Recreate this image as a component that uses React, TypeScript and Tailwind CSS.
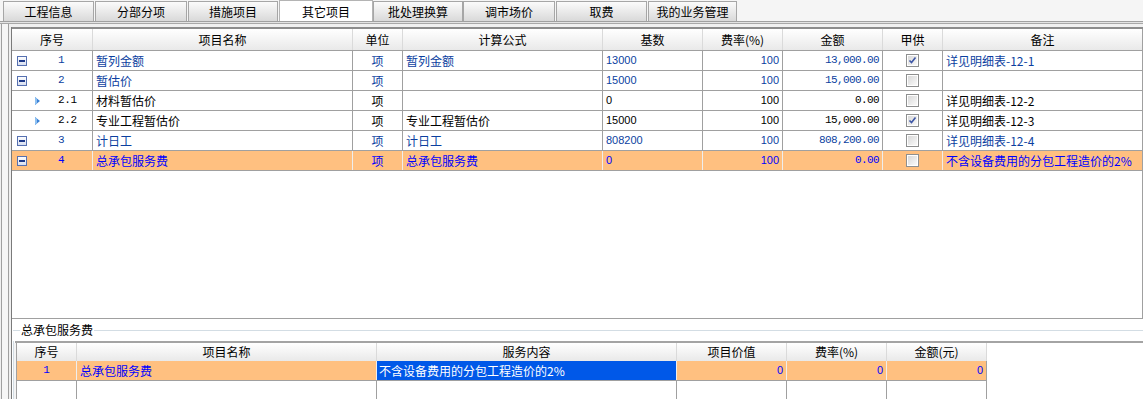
import React from "react";

const FONT = "font-['Liberation_Sans','Noto_Sans_CJK_SC',sans-serif]";
const CJK = "font-['Noto_Sans_CJK_SC',sans-serif]";
const MONO = "font-['Liberation_Mono','Noto_Sans_CJK_SC',monospace]";

const MAIN_COLS =
  "grid grid-cols-[81px_260px_50px_200px_100px_80px_100px_60px_200px]";
const SUB_COLS = "grid grid-cols-[60px_300px_300px_110px_100px_100px]";

const tabs = [
  { label: "工程信息", cls: "w-[91px] ml-[3px]" },
  { label: "分部分项", cls: "w-[92px] ml-[1px]" },
  { label: "措施项目", cls: "w-[90px] ml-[1px]" },
  { label: "其它项目", cls: "w-[94px] ml-[1px]", active: true },
  { label: "批处理换算", cls: "w-[90px] ml-0" },
  { label: "调市场价", cls: "w-[92px] ml-0" },
  { label: "取费", cls: "w-[91px] ml-[1px]" },
  { label: "我的业务管理", cls: "w-[89px] ml-[1px]" },
];

type Row = {
  kind: "parent" | "child" | "selected";
  no: string;
  name: string;
  formula: string;
  base: string;
  rate: string;
  amount: string;
  checked: boolean;
  note: string;
};

const rows: Row[] = [
  { kind: "parent", no: "1", name: "暂列金额", formula: "暂列金额", base: "13000", rate: "100", amount: "13,000.00", checked: true, note: "详见明细表-12-1" },
  { kind: "parent", no: "2", name: "暂估价", formula: "", base: "15000", rate: "100", amount: "15,000.00", checked: false, note: "" },
  { kind: "child", no: "2.1", name: "材料暂估价", formula: "", base: "0", rate: "100", amount: "0.00", checked: false, note: "详见明细表-12-2" },
  { kind: "child", no: "2.2", name: "专业工程暂估价", formula: "专业工程暂估价", base: "15000", rate: "100", amount: "15,000.00", checked: true, note: "详见明细表-12-3" },
  { kind: "parent", no: "3", name: "计日工", formula: "计日工", base: "808200", rate: "100", amount: "808,200.00", checked: false, note: "详见明细表-12-4" },
  { kind: "selected", no: "4", name: "总承包服务费", formula: "总承包服务费", base: "0", rate: "100", amount: "0.00", checked: false, note: "不含设备费用的分包工程造价的2%" },
];

function CollapseIcon() {
  return (
    <svg width="10" height="10" viewBox="0 0 10 10" className="shrink-0">
      <defs>
        <linearGradient id="cg" x1="0" y1="0" x2="0" y2="1">
          <stop offset="0" stopColor="#ffffff" />
          <stop offset="1" stopColor="#d6ddf0" />
        </linearGradient>
      </defs>
      <rect x="0.5" y="0.5" width="9" height="9" fill="url(#cg)" stroke="#5670b0" />
      <rect x="2" y="4" width="6" height="2" fill="#1e3a8a" />
    </svg>
  );
}

function Triangle() {
  return (
    <svg width="5" height="8" viewBox="0 0 5 8" className="shrink-0">
      <path d="M0 0 L5 4 L0 8 Z" fill="#3b82d6" />
      <path d="M0 0 L2 1.5 L2 6.5 L0 8 Z" fill="#8ec0f0" />
    </svg>
  );
}

function CheckBox({ checked }: { checked: boolean }) {
  return (
    <svg width="13" height="13" viewBox="0 0 13 13">
      <defs>
        <linearGradient id="cbg" x1="0" y1="0" x2="1" y2="1">
          <stop offset="0" stopColor="#d8d8d8" />
          <stop offset="1" stopColor="#fafafa" />
        </linearGradient>
      </defs>
      <rect x="0.5" y="0.5" width="12" height="12" fill="#ffffff" stroke="#8e8f8f" />
      <rect x="2" y="2" width="9" height="9" fill="url(#cbg)" />
      {checked && (
        <path d="M3.5 6.5 L5.5 8.5 L9.5 3.5" fill="none" stroke="#3d56a6" strokeWidth="1.6" />
      )}
    </svg>
  );
}

function MainRow({ r }: { r: Row }) {
  const sel = r.kind === "selected";
  const color =
    r.kind === "parent" ? "text-[#0c3f9f]" : r.kind === "child" ? "text-black" : "text-[#0000ff]";
  const bg = sel ? "bg-[#ffc080]" : "bg-white";
  const vb = sel ? "border-r border-[#eeeeee]" : "border-r border-[#a0a0a0]";
  const cell = `${vb} ${bg} flex items-center overflow-hidden whitespace-nowrap`;
  return (
    <div className={`${MAIN_COLS} h-[20px] border-b border-[#a0a0a0] text-[12px] ${color}`}>
      <div className={cell}>
        {r.kind === "child" ? (
          <>
            <div className="w-[23px] shrink-0" />
            <Triangle />
            <span className={`ml-[18px] ${MONO} text-[11px] tracking-[-0.4px]`}>{r.no}</span>
          </>
        ) : (
          <>
            <div className="w-[5px] shrink-0" />
            <CollapseIcon />
            <span className={`ml-[31px] ${MONO} text-[11px]`}>{r.no}</span>
          </>
        )}
      </div>
      <div className={`${cell} pl-[3px] ${CJK}`}>{r.name}</div>
      <div className={`${cell} justify-center ${CJK}`}>项</div>
      <div className={`${cell} pl-[3px] ${CJK}`}>{r.formula}</div>
      <div className={`${cell} pl-[3px] text-[11px]`}>{r.base}</div>
      <div className={`${cell} justify-end pr-[3px] text-[11px]`}>{r.rate}</div>
      <div className={`${cell} justify-end pr-[3px] ${MONO} text-[11px] tracking-[-0.6px]`}>{r.amount}</div>
      <div className={`${cell} justify-center`}>
        <CheckBox checked={r.checked} />
      </div>
      <div className={`${bg} border-r border-[#a0a0a0] flex items-center pl-[3px] overflow-hidden whitespace-nowrap ${CJK} ${r.kind === "selected" ? "text-[#0000ff]" : r.kind === "child" ? "text-black" : "text-[#0c3f9f]"}`}>
        {r.note}
      </div>
    </div>
  );
}

const mainHeaders = ["序号", "项目名称", "单位", "计算公式", "基数", "费率(%)", "金额", "甲供", "备注"];
const subHeaders = ["序号", "项目名称", "服务内容", "项目价值", "费率(%)", "金额(元)"];

export default function App() {
  return (
    <div className={`w-[1143px] h-[399px] overflow-hidden bg-[#f0f0f0] ${FONT} text-[12px] text-black`}>
      {/* Tabs */}
      <div className="h-[21px] flex items-end bg-[#f5f5f5]">
        {tabs.map((t) =>
          t.active ? (
            <div
              key={t.label}
              className={`${t.cls} h-[21px] bg-white border-x border-t border-[#b4b4b4] flex items-start justify-center pt-[2px] ${CJK} text-[12px]`}
            >
              {t.label}
            </div>
          ) : (
            <div
              key={t.label}
              className={`${t.cls} h-[20px] bg-gradient-to-b from-[#fbfbfb] to-[#d9d9d9] border-x border-t border-[#a6a6a6] flex items-center justify-center pt-[1px] ${CJK} text-[12px]`}
            >
              {t.label}
            </div>
          )
        )}
      </div>
      <div className="h-px bg-[#a0a0a0]" />
      <div className="h-px bg-[#e4e4e4]" />
      <div className="h-px bg-[#a8a8a8]" />

      <div className="flex h-[375px]">
        {/* left frame strip */}
        <div className="w-[11px] flex shrink-0">
          <div className="w-px" />
          <div className="w-px bg-[#a0a0a0]" />
          <div className="w-[6px] bg-[#f6f6f6]" />
          <div className="w-px bg-[#a0a0a0]" />
          <div className="w-[2px]" />
        </div>

        {/* panel */}
        <div className="flex-1 mt-[3px] flex flex-col border-l border-[#7a7a7a] bg-white">
          {/* upper pane */}
          <div className="h-[291px] flex flex-col border-t-2 border-[#8c8c8c]">
            <div className={`${MAIN_COLS} h-[22px] border-b border-[#a0a0a0]`}>
              {mainHeaders.map((h, i) => (
                <div
                  key={h}
                  className={`flex items-center justify-center bg-gradient-to-b from-white to-[#e9e9e9] ${CJK} text-[12px] ${i === mainHeaders.length - 1 ? "border-r border-[#a0a0a0]" : "border-r border-[#dadada]"}`}
                >
                  {h}
                </div>
              ))}
            </div>
            {rows.map((r) => (
              <MainRow key={r.no} r={r} />
            ))}
            <div className="flex-1 border-r border-[#a0a0a0]" />
          </div>
          <div className="h-px bg-[#a0a0a0]" />

          {/* lower pane */}
          <div className="flex-1 flex flex-col">
            <div className="h-[22px] flex items-center">
              <div className="w-px" />
              <div className="w-[7px] h-px bg-[#d3dde4]" />
              <span className={`${CJK} text-[12px] px-px leading-none`}>总承包服务费</span>
              <div className="flex-1 h-px bg-[#d3dde4]" />
            </div>
            <div className="flex-1 flex flex-col ml-[1px] border-l border-[#d3dde4]">
              <div className="ml-[1px] border-t-2 border-[#a4a4a4]" />
              <div className="flex flex-1">
                <div className="w-[2px] bg-[#f4f4f4]" />
                <div className="border-l border-[#a0a0a0] flex flex-col">
                  <div className={`${SUB_COLS} h-[18px] border-b border-[#a0a0a0]`}>
                    {subHeaders.map((h) => (
                      <div
                        key={h}
                        className={`flex items-center justify-center bg-gradient-to-b from-white to-[#e9e9e9] border-r border-[#dadada] ${CJK} text-[12px]`}
                      >
                        {h}
                      </div>
                    ))}
                  </div>
                  <div className={`${SUB_COLS} h-[20px] border-b border-[#a0a0a0] text-[#0000ff] text-[12px]`}>
                    <div className={`bg-[#ffc080] border-r border-[#eeeeee] flex items-center justify-center ${MONO} text-[11px]`}>1</div>
                    <div className={`bg-[#ffc080] border-r border-[#eeeeee] flex items-center pl-[3px] ${CJK}`}>总承包服务费</div>
                    <div className={`bg-[#0058e8] border-r border-[#eeeeee] flex items-center pl-[2px] text-white ${CJK} whitespace-nowrap`}>
                      不含设备费用的分包工程造价的2%
                    </div>
                    <div className="bg-[#ffc080] border-r border-[#eeeeee] flex items-center justify-end pr-[3px] text-[11px]">0</div>
                    <div className="bg-[#ffc080] border-r border-[#eeeeee] flex items-center justify-end pr-[3px] text-[11px]">0</div>
                    <div className="bg-[#ffc080] border-r border-[#a0a0a0] flex items-center justify-end pr-[3px] text-[11px]">0</div>
                  </div>
                  <div className={`${SUB_COLS} flex-1`}>
                    {subHeaders.map((h) => (
                      <div key={h} className="border-r border-[#a0a0a0]" />
                    ))}
                  </div>
                </div>
                <div className="flex-1" />
              </div>
            </div>
          </div>
        </div>
      </div>
    </div>
  );
}
